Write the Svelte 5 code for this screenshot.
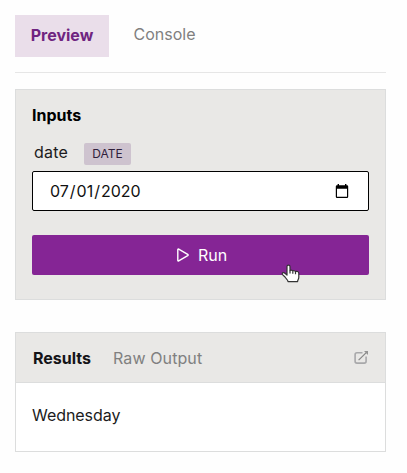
<script>
  let view = $state('preview');
  let resultTab = $state('results');
  const date = ['07', '01', '2020'];
  const result = 'Wednesday';
</script>

<main>
  <nav class="tabs">
    <button class="tab" class:active={view === 'preview'} onclick={() => (view = 'preview')}>Preview</button>
    <button class="tab" class:active={view === 'console'} onclick={() => (view = 'console')}>Console</button>
  </nav>

  <section class="inputs">
    <h2>Inputs</h2>
    <div class="label"><span class="name">date</span><span class="badge">DATE</span></div>
    <div class="field">
      <span class="date"><span>{date[0]}</span>/<span>{date[1]}</span>/<span>{date[2]}</span></span>
      <svg width="14" height="15" viewBox="0 0 14 15" aria-hidden="true">
        <path fill="#000" fill-rule="evenodd" d="M2.6 0H4v1.3h6V0h1.4v1.3H12a1.2 1.2 0 0 1 1.2 1.2v10.2a1.2 1.2 0 0 1-1.2 1.2H2a1.2 1.2 0 0 1-1.2-1.2V2.5A1.2 1.2 0 0 1 2 1.3h.6zM2 4.7v8h10v-8z" />
      </svg>
    </div>
    <button class="run">
      <svg width="14" height="16" viewBox="0 0 14 16" aria-hidden="true">
        <path d="M1.8 2.6v10.8c0 .6.4.8.9.5l9-5.2c.6-.4.6-.9 0-1.3l-9-5.3c-.5-.3-.9-.1-.9.5z" fill="none" stroke="#fff" stroke-width="1.4" stroke-linejoin="round" />
      </svg>
      <span>Run</span>
    </button>
    <svg class="cursor" width="21" height="23" viewBox="0 0 21 23" aria-hidden="true">
      <path d="M6 2.6c0-2 3-2 3 0v4c.7-.6 2.3-.5 2.7.4.8-.5 2.3-.4 2.7.6 1.2-.6 3.4-.1 3.4 1.7v3.9c0 2-1.2 2.6-1.2 4.4H7c0-1.8-2-2.8-3-4.6l-2.5-2.4c-1-1.7 1-2.6 2.4-1.4L6 11z" fill="#fff" stroke="#333" stroke-width="1.2" stroke-linejoin="round" />
      <path d="M9 6.6v3M11.8 7.2v2.6M14.5 7.8v2.4" stroke="#333" stroke-width="1.2" />
    </svg>
  </section>

  <section class="results">
    <header>
      <button class:active={resultTab === 'results'} onclick={() => (resultTab = 'results')}>Results</button>
      <button class="raw" class:active={resultTab === 'raw'} onclick={() => (resultTab = 'raw')}>Raw Output</button>
      <svg width="15" height="15" viewBox="0 0 15 15" fill="none" aria-hidden="true">
        <path d="M8.5 2.8H3A1.9 1.9 0 0 0 1.1 4.7v6.5A1.9 1.9 0 0 0 3 13.1h7.2a1.9 1.9 0 0 0 1.9-1.9V6.5" stroke="#a8a8aa" stroke-width="1.6" />
        <path d="M4.6 10.2 13 1.8" stroke="#858585" stroke-width="1.2" />
        <path d="M10 .9h4v4z" fill="#929292" />
      </svg>
    </header>
    <div class="output">{result}</div>
  </section>
</main>

<style>
  :global(body) {
    background: #fefefe;
  }
  main {
    box-sizing: border-box;
    width: 407px;
    height: 473px;
    padding: 15px 21px 0 15px;
    font: 16px/24px Inter, sans-serif;
    color: #1b1b20;
  }
  button {
    border: 0;
    padding: 0;
    background: none;
    font: inherit;
    color: #808080;
    cursor: pointer;
  }
  .tabs {
    display: flex;
    align-items: flex-start;
    gap: 8.5px;
    height: 57px;
    border-bottom: 1px solid #e6e6e6;
  }
  .tab {
    padding: 7px 16px 11px;
  }
  .tab.active {
    width: 94px;
    padding: 8px 0 10px;
    background: #eadeea;
    color: #6f2480;
    font-weight: 700;
  }
  section {
    box-sizing: border-box;
    border: 1px solid #dcdddd;
  }
  .inputs {
    position: relative;
    height: 211px;
    margin-top: 16px;
    padding: 13px 16px 0;
    background: #e9e8e6;
  }
  h2 {
    margin: 0;
    font-size: 16px;
    line-height: 24px;
    font-weight: 700;
    color: #000;
  }
  .label {
    display: flex;
    align-items: flex-start;
    height: 28px;
    margin-top: 16px;
    padding-left: 2px;
  }
  .name {
    width: 50px;
    line-height: 18px;
    letter-spacing: 0.2px;
  }
  .badge {
    box-sizing: border-box;
    width: 47px;
    height: 22px;
    border-radius: 2px;
    background: #cec3cf;
    text-align: center;
    font-size: 12px;
    line-height: 22px;
    color: #30203b;
  }
  .field {
    box-sizing: border-box;
    display: flex;
    align-items: center;
    justify-content: space-between;
    height: 40px;
    padding: 0 19px 0 16px;
    border: 1px solid #000;
    border-radius: 2px;
    background: #fff;
    color: #111;
  }
  .date span {
    padding: 0 1px;
  }
  .run {
    display: flex;
    align-items: center;
    justify-content: center;
    gap: 8px;
    width: 100%;
    height: 40px;
    margin-top: 24px;
    padding-left: 2px;
    border-radius: 2px;
    background: #852595;
    color: #fff;
  }
  .cursor {
    position: absolute;
    left: 265px;
    top: 174px;
  }
  .results {
    height: 120px;
    margin-top: 32px;
    background: #fff;
  }
  header {
    display: flex;
    align-items: center;
    gap: 22px;
    height: 49px;
    padding: 0 16px 0 17px;
    border-bottom: 1px solid #dcdddd;
    background: #e9e8e6;
  }
  header .active {
    font-weight: 700;
    color: #141418;
  }
  .raw {
    letter-spacing: 0.1px;
  }
  header svg {
    margin-left: auto;
  }
  .output {
    padding: 20px 16px;
    letter-spacing: -0.05px;
  }
</style>
